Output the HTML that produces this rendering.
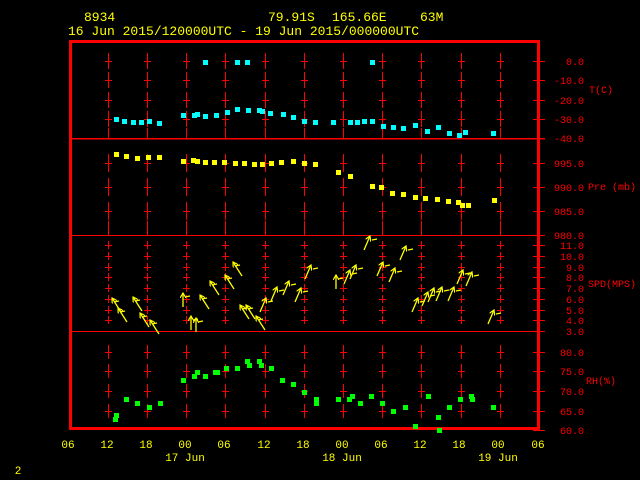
<!DOCTYPE html>
<html><head><meta charset="utf-8"><style>
html,body{margin:0;padding:0;background:#000;width:640px;height:480px;overflow:hidden}
svg{display:block}
text{font-family:"Liberation Mono","DejaVu Sans Mono",monospace}
</style></head><body>
<svg width="640" height="480" viewBox="0 0 640 480" xmlns="http://www.w3.org/2000/svg">
<defs>
<marker id="ah" markerWidth="6" markerHeight="6" refX="5" refY="3" orient="auto" markerUnits="userSpaceOnUse"><path d="M0,0 L5,3 L0,6" fill="none" stroke="#ff0" stroke-width="1.2"/></marker>
</defs>
<g fill="#ff0" font-size="13">
<text x="84" y="21">8934</text>
<text x="268" y="21">79.91S</text><text x="332" y="21">165.66E</text><text x="420" y="21">63M</text>
<text x="68" y="35" xml:space="preserve">16 Jun 2015/120000UTC - 19 Jun 2015/000000UTC</text>
</g>
<g id="grid" stroke="#f00" stroke-width="1" shape-rendering="crispEdges"></g>
<g stroke="#f00" fill="none" shape-rendering="crispEdges">
<rect x="70.5" y="41.5" width="468" height="387" stroke-width="3"/>
<line x1="70" y1="138.5" x2="545" y2="138.5" stroke-width="1.5"/>
<line x1="70" y1="235.5" x2="545" y2="235.5"/>
<line x1="70" y1="331.5" x2="545" y2="331.5"/>
</g>
<g id="labels" fill="#f00" font-size="10" text-anchor="end"></g>
<g fill="#f00" font-size="10">
<text x="589" y="93">T(C)</text>
<text x="588" y="190" xml:space="preserve">Pre (mb)</text>
<text x="588" y="287">SPD(MPS)</text>
<text x="586" y="384">RH(%)</text>
</g>
<g fill="#ff0" font-size="11" text-anchor="middle">
<text x="68" y="448">06</text><text x="107" y="448">12</text><text x="146" y="448">18</text><text x="185" y="448">00</text><text x="224" y="448">06</text><text x="264" y="448">12</text><text x="303" y="448">18</text><text x="342" y="448">00</text><text x="381" y="448">06</text><text x="420" y="448">12</text><text x="459" y="448">18</text><text x="498" y="448">00</text><text x="538" y="448">06</text>
<text x="185" y="461">17 Jun</text><text x="342" y="461">18 Jun</text><text x="498" y="461">19 Jun</text>
<text x="18" y="474">2</text>
</g>
<g id="pts" shape-rendering="crispEdges"></g>
<g id="arr" stroke="#ff0" stroke-width="1.3" fill="none"></g>
</svg>
<script>
var ns="http://www.w3.org/2000/svg";
function el(p,t,a){var e=document.createElementNS(ns,t);for(var k in a)e.setAttribute(k,a[k]);document.getElementById(p).appendChild(e);return e;}
var xs=[108,147,186,225,265,304,343,382,421,461,500];
function cross(ys,half){xs.forEach(function(x){ys.forEach(function(y){
el('grid','line',{x1:x+.5,y1:y-half,x2:x+.5,y2:y+half});
el('grid','line',{x1:x-3,y1:y+.5,x2:x+4,y2:y+.5});});});}
var T=[61,80,100,119],P=[163,187,211],S=[],R=[352,371,391,411];
for(var v=4;v<=11;v++)S.push(Math.round(331-10.75*(v-3)));
cross(T,8);cross(P,9);cross(S,4);cross(R,7);
xs.forEach(function(x){el('grid','line',{x1:x+.5,y1:128,x2:x+.5,y2:138});el('grid','line',{x1:x+.5,y1:221,x2:x+.5,y2:235});});
function lab(ys,txt){ys.forEach(function(y,i){el('grid','line',{x1:533,y1:y+.5,x2:545,y2:y+.5});var t=el('labels','text',{x:584,y:y+4});t.textContent=txt[i];});}
lab([61,80,100,119,138],["0.0","-10.0","-20.0","-30.0","-40.0"]);
lab([163,187,211,235],["995.0","990.0","985.0","980.0"]);
var sv=[];for(var v=11;v>=3;v--)sv.push(Math.round(331-10.75*(v-3)));
lab(sv,["11.0","10.0","9.0","8.0","7.0","6.0","5.0","4.0","3.0"]);
lab([352,371,391,411,430],["80.0","75.0","70.0","65.0","60.0"]);
function pts(c,a){a.forEach(function(p){el('pts','rect',{x:p[0]-2,y:p[1]-2,width:5,height:5,fill:c});});}
pts('#0ff',[[116,119],[124,121],[133,122],[141,122],[149,121],[159,123],[183,115],[194,115],[197,114],[205,116],[216,115],[227,112],[237,109],[248,110],[259,110],[262,111],[270,113],[283,114],[293,117],[304,121],[315,122],[333,122],[350,122],[357,122],[364,121],[372,121],[383,126],[393,127],[403,128],[415,125],[427,131],[438,127],[449,133],[459,135],[465,132],[493,133],[205,62],[237,62],[247,62],[372,62]]);
pts('#ff0',[[116,154],[126,156],[137,158],[148,157],[159,157],[183,161],[193,160],[197,161],[205,162],[214,162],[224,162],[235,163],[244,163],[254,164],[262,164],[271,163],[281,162],[293,161],[304,163],[315,164],[338,172],[350,176],[372,186],[381,187],[392,193],[403,194],[415,197],[425,198],[437,199],[448,201],[458,202],[462,205],[468,205],[494,200]]);
pts('#0f0',[[115,419],[116,415],[126,399],[137,403],[149,407],[160,403],[183,380],[194,376],[197,372],[205,376],[215,372],[217,372],[226,368],[237,368],[247,361],[249,365],[259,361],[261,365],[271,368],[282,380],[293,384],[304,392],[316,403],[316,399],[338,399],[349,399],[352,396],[360,403],[371,396],[382,403],[393,411],[405,407],[415,426],[428,396],[438,417],[439,430],[449,407],[460,399],[471,396],[472,399],[493,407]]);
var A=[[112,298,-1],[118,308,-1],[133,297,-1],[140,313,-1],[150,320,-1],[183,293,0],[191,316,0],[196,318,0],[200,295,-1],[210,281,-1],[225,275,-1],[233,262,-1],[240,305,-1],[246,305,-1],[256,316,-1],[266,298,1],[277,287,1],[289,281,1],[301,288,1],[311,265,1],[336,275,0],[350,270,1],[356,265,1],[370,236,1],[383,262,1],[395,268,1],[406,246,1],[418,298,1],[428,292,1],[434,288,1],[442,287,1],[454,287,1],[463,270,1],[472,272,1],[494,310,1]];
A.forEach(function(a){el('arr','line',{x1:a[0]+(a[2]<0?9:(a[2]>0?-6:0)),y1:a[1]+14,x2:a[0],y2:a[1],'marker-end':'url(#ah)'});el('arr','line',{x1:a[0]+2,y1:a[1]+4,x2:a[0]+7,y2:a[1]+3});});
</script>
</body></html>
